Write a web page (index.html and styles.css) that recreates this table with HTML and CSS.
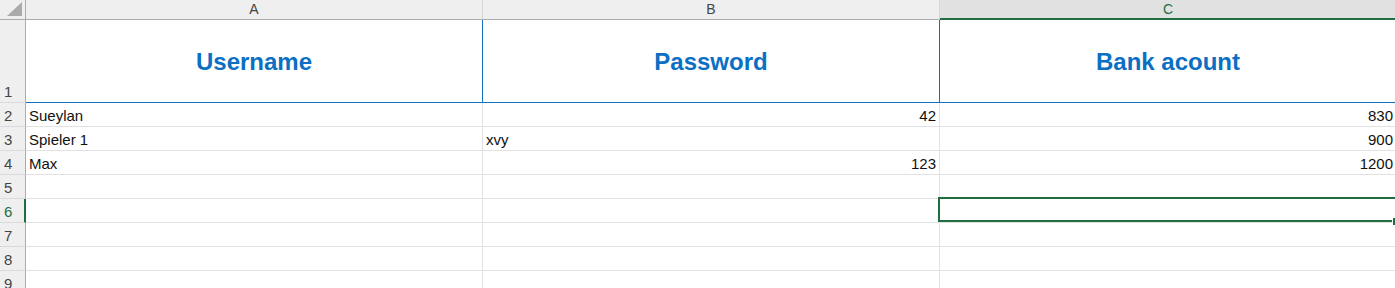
FILE: index.html
```html
<!DOCTYPE html>
<html lang="en">
<head>
    <meta charset="UTF-8">
    <meta name="viewport" content="width=device-width, initial-scale=1.0">
    <title>Accounts</title>
    <link rel="stylesheet" href="styles.css">
</head>
<body>
    <div class="sheet">
        <div class="corner"><span class="tri"></span></div>
        <div class="colhead">A</div>
        <div class="colhead">B</div>
        <div class="colhead active">C</div>

        <div class="rowhead">1</div>
        <div class="cell title">Username</div>
        <div class="cell title">Password</div>
        <div class="cell title">Bank acount</div>

        <div class="rowhead">2</div>
        <div class="cell">Sueylan</div>
        <div class="cell num">42</div>
        <div class="cell num">830</div>

        <div class="rowhead">3</div>
        <div class="cell">Spieler 1</div>
        <div class="cell">xvy</div>
        <div class="cell num">900</div>

        <div class="rowhead">4</div>
        <div class="cell">Max</div>
        <div class="cell num">123</div>
        <div class="cell num">1200</div>

        <div class="rowhead">5</div>
        <div class="cell"></div>
        <div class="cell"></div>
        <div class="cell"></div>

        <div class="rowhead active">6</div>
        <div class="cell"></div>
        <div class="cell"></div>
        <div class="cell selected"><span class="handle"></span></div>

        <div class="rowhead">7</div>
        <div class="cell"></div>
        <div class="cell"></div>
        <div class="cell"></div>

        <div class="rowhead">8</div>
        <div class="cell"></div>
        <div class="cell"></div>
        <div class="cell"></div>

        <div class="rowhead">9</div>
        <div class="cell"></div>
        <div class="cell"></div>
        <div class="cell"></div>
    </div>
</body>
</html>
```

FILE: styles.css
```css
* {
    box-sizing: border-box;
}

body {
    margin: 0;
    background-color: #fff;
    font-family: 'Liberation Sans', Arial, sans-serif;
    overflow: hidden;
}

.sheet {
    display: grid;
    grid-template-columns: 26px 457px 457px 457px;
    grid-template-rows: 20px 83px repeat(8, 24px);
    width: 1397px;
}

.corner {
    background-color: #efefef;
    border-right: 1px solid #ababab;
    border-bottom: 1px solid #ababab;
    display: flex;
    align-items: flex-end;
    justify-content: flex-end;
    padding: 0 3px 3px 0;
}

.tri {
    width: 15px;
    height: 14px;
    background-color: #ababab;
    clip-path: polygon(100% 0, 100% 100%, 0 100%);
}

.colhead {
    background-color: #efefef;
    border-right: 1px solid #d6d6d6;
    border-bottom: 1px solid #ababab;
    color: #444;
    font-size: 14px;
    text-align: center;
    line-height: 19px;
}

.colhead.active {
    background-color: #e1e1e1;
    border-bottom: 2px solid #1f6e43;
    color: #1f6e43;
}

.rowhead {
    background-color: #efefef;
    border-right: 1px solid #ababab;
    border-bottom: 1px solid #dadada;
    color: #444;
    font-size: 15px;
    display: flex;
    align-items: flex-end;
    padding: 0 0 2px 4px;
}

.rowhead.active {
    border-right: 2px solid #1f6e43;
    color: #1f6e43;
}

.cell {
    border-right: 1px solid #e1e1e1;
    border-bottom: 1px solid #e1e1e1;
    color: #111;
    font-size: 15px;
    display: flex;
    align-items: flex-end;
    padding: 0 3px 2px 3px;
    white-space: nowrap;
}

.cell.num {
    justify-content: flex-end;
}

.cell.title {
    border-right: 1px solid #0f6fc0;
    border-bottom: 1px solid #0f6fc0;
    color: #0b6fc4;
    font-size: 24px;
    font-weight: bold;
    align-items: center;
    justify-content: center;
    padding: 2px 0 0 0;
}

.cell.selected {
    position: relative;
}

/* active cell frame sits over the gridlines */
.cell.selected::after {
    content: "";
    position: absolute;
    top: -2px;
    left: -2px;
    right: -1px;
    bottom: 0;
    border: 2px solid #1f6e43;
}

.handle {
    position: absolute;
    right: -1px;
    bottom: -3px;
    width: 5px;
    height: 7px;
    background-color: #1f6e43;
    border-left: 1px solid #fff;
    z-index: 1;
}
```
